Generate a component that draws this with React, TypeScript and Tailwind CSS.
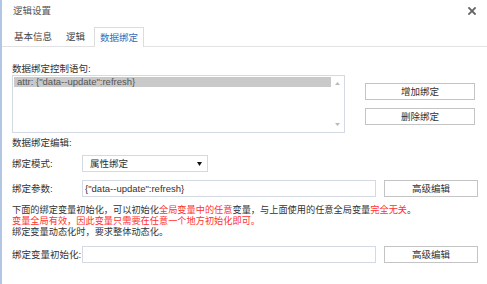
import React from 'react';

const FONT = "font-['Liberation_Sans','Noto_Sans_CJK_SC',sans-serif]";

const TABS = [
  { label: '基本信息', active: false },
  { label: '逻辑', active: false },
  { label: '数据绑定', active: true },
];

const FieldButton: React.FC<{ label: string; className?: string }> = ({ label, className = '' }) => (
  <button
    type="button"
    className={`h-[17px] border border-[#c4c4c4] bg-white text-[#333] flex items-center justify-center ${className}`}
  >
    {label}
  </button>
);

const App: React.FC = () => {
  return (
    <div className={`${FONT} w-[487px] h-[284px] bg-white border-l-2 border-[#b2c6e4] text-[9.5px] leading-none text-[#333] overflow-hidden`}>
      {/* title bar */}
      <div className="h-[21px] flex items-center justify-between pl-[11px] pr-[10px]">
        <span className="text-[#555]">逻辑设置</span>
        <svg width="8" height="8" viewBox="0 0 8 8" className="mr-[1px]">
          <path d="M1 1L7 7M7 1L1 7" stroke="#666" strokeWidth="1.8" strokeLinecap="square" />
        </svg>
      </div>

      {/* tabs */}
      <div className="mt-[6px] h-[20px] flex pl-[7px] gap-[4px] border-b border-[#e2e2e2]">
        {TABS.map(tab => (
          <div
            key={tab.label}
            className={
              tab.active
                ? 'h-[20px] px-[5px] flex items-center border border-b-0 border-[#dcdcdc] bg-white text-[#3b6cb4]'
                : 'h-[20px] px-[5px] flex items-center text-[#444]'
            }
          >
            {tab.label}
          </div>
        ))}
      </div>

      <div className="pl-[10px]">
        {/* control statements */}
        <div className="mt-[16px] h-[12px] flex items-center">数据绑定控制语句:</div>
        <div className="flex">
          <div className="w-[333px] h-[58px] border border-[#d3dae3] flex p-px">
            <div className="flex-1">
              <div className="h-[10px] bg-[#c9c9c9] pl-[3px] flex items-center text-[#555]">
                attr: {'{'}"data--update":refresh{'}'}
              </div>
            </div>
            <div className="w-[12px] flex flex-col items-center justify-between py-[5px]">
              <svg width="5" height="3" viewBox="0 0 5 3"><path d="M0 3L2.5 0L5 3Z" fill="#bbb" /></svg>
              <svg width="5" height="3" viewBox="0 0 5 3"><path d="M0 0L2.5 3L5 0Z" fill="#bbb" /></svg>
            </div>
          </div>
          <div className="ml-[20px] flex flex-col gap-[8px] pt-[8px]">
            <FieldButton label="增加绑定" className="w-[110px]" />
            <FieldButton label="删除绑定" className="w-[110px]" />
          </div>
        </div>

        {/* editor */}
        <div className="mt-[4px] h-[12px] flex items-center">数据绑定编辑:</div>

        <div className="mt-[6px] h-[17px] flex items-center">
          <span className="w-[70px]">绑定模式:</span>
          <div className="w-[126px] h-[17px] border border-[#d3dae3] flex items-center justify-between pl-[7px] pr-[5px]">
            <span>属性绑定</span>
            <svg width="5" height="4" viewBox="0 0 5 4"><path d="M0 0H5L2.5 4Z" fill="#111" /></svg>
          </div>
        </div>

        <div className="mt-[8px] h-[17px] flex items-center">
          <span className="w-[70px]">绑定参数:</span>
          <div className="w-[294px] h-[17px] border border-[#d3dae3] flex items-center pl-[2px]">
            {'{'}"data--update":refresh{'}'}
          </div>
          <FieldButton label="高级编辑" className="ml-[8px] w-[94px]" />
        </div>

        <div className="mt-[8px] leading-[11px] text-[9.2px]">
          <div>
            下面的绑定变量初始化，可以初始化<span className="text-[#ff3030]">全局变量中的任意</span>变量，与上面使用的任意全局变量<span className="text-[#ff3030]">完全无关</span>。
          </div>
          <div className="text-[#ff3030]">变量全局有效，因此变量只需要在任意一个地方初始化即可。</div>
          <div>绑定变量动态化时，要求整体动态化。</div>
        </div>

        <div className="mt-[8px] h-[17px] flex items-center">
          <span className="w-[70px]">绑定变量初始化:</span>
          <div className="w-[294px] h-[17px] border border-[#d3dae3]" />
          <FieldButton label="高级编辑" className="ml-[8px] w-[94px]" />
        </div>
      </div>
    </div>
  );
};

export default App;
